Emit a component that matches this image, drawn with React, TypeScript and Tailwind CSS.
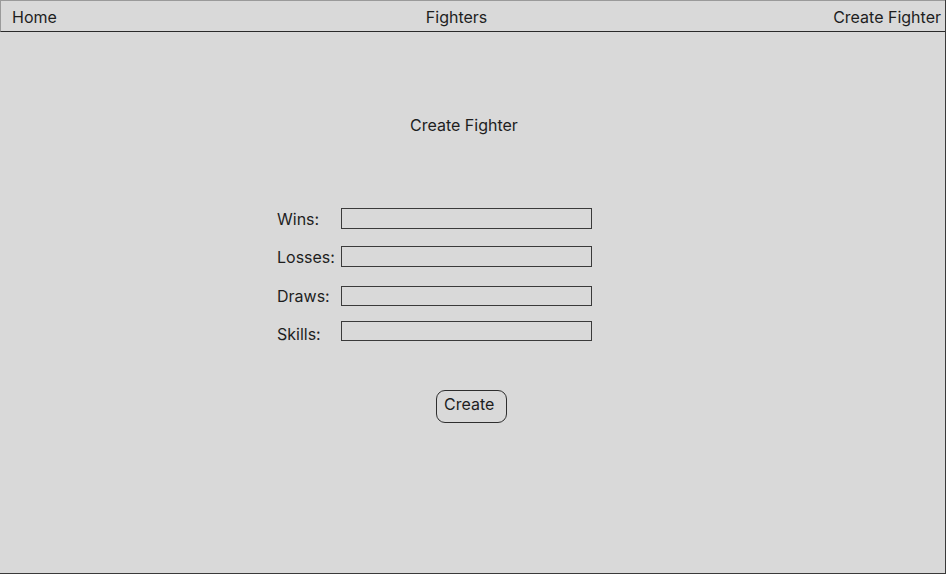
const fields = [
  { label: "Wins:", mt: "mt-[71px]", h: "h-[21px]", labelPad: "pt-0" },
  { label: "Losses:", mt: "mt-[17px]", h: "h-[21px]", labelPad: "pt-[1px]" },
  { label: "Draws:", mt: "mt-[19px]", h: "h-[20px]", labelPad: "pt-0" },
  { label: "Skills:", mt: "mt-[15px]", h: "h-[20px]", labelPad: "pt-[6px]" },
] as const;

export default function App() {
  return (
    <div className="flex h-[574px] w-[946px] flex-col border-r border-b border-[#3a3a3a] bg-[#d9d9d9] font-['Inter',sans-serif] text-base text-[#1e1e1e]">
      <nav className="flex h-[32px] items-center border-t border-l border-b border-t-[#9a9a9a] border-l-[#9a9a9a] border-b-[#2a2a2a] pt-[2px] pr-[4px] pl-[11px]">
        <a href="#" className="leading-6">Home</a>
        <a href="#" className="ml-[369px] leading-6">Fighters</a>
        <a href="#" className="ml-auto leading-6">Create Fighter</a>
      </nav>

      <main className="flex flex-col">
        <h1 className="mt-[81px] ml-[410px] text-base leading-6 font-normal">Create Fighter</h1>

        <form className="ml-[277px] flex flex-col">
          {fields.map((f) => (
            <div key={f.label} className={`${f.mt} ${f.h} flex items-center`}>
              <label className={`w-[64px] leading-6 ${f.labelPad}`}>{f.label}</label>
              <input
                type="text"
                aria-label={f.label}
                className={`${f.h} w-[251px] border border-[#3a3a3a] bg-transparent outline-none`}
              />
            </div>
          ))}

          <button
            type="button"
            className="mt-[49px] ml-[159px] h-[33px] w-[71px] self-start rounded-[9px] border border-[#2e2e2e] pt-[1px] pr-[13px] pb-[6px] pl-[7px] text-left leading-6"
          >
            Create
          </button>
        </form>
      </main>
    </div>
  );
}
